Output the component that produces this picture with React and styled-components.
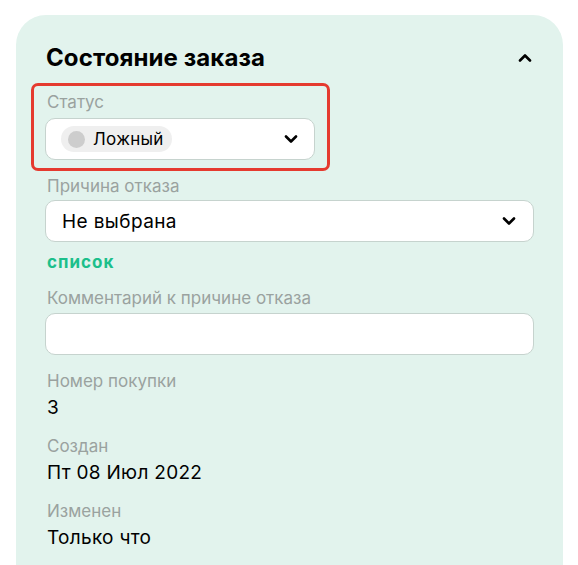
import React from 'react';
import styled, { createGlobalStyle } from 'styled-components';

const GlobalStyle = createGlobalStyle`
  html, body {
    margin: 0;
    padding: 0;
    background: #ffffff;
    font-family: Inter, "Noto Sans", sans-serif;
    color: #000;
    overflow: hidden;
  }
`;

const Page = styled.div`
  padding: 15px 15px 0 16px;
`;

const Panel = styled.section`
  width: 547px;
  box-sizing: border-box;
  min-height: 600px;
  padding: 28px 29px 40px;
  background: #e2f3ed;
  border-radius: 30px 30px 0 0;
`;

const Header = styled.div`
  display: flex;
  align-items: center;
  justify-content: space-between;
  height: 28px;
  margin-bottom: 12px;
`;

const Title = styled.h2`
  margin: 0 0 0 1px;
  font-size: 24px;
  font-weight: 700;
  letter-spacing: 0.1px;
`;

const Body = styled.div`
  display: flex;
  flex-direction: column;
  gap: 16px;
`;

const Highlight = styled.div`
  align-self: flex-start;
  border: 3px solid #e53a2f;
  border-radius: 7px;
  padding: 6px 12px 8px 11px;
  margin: 0 0 -11px -14px;
`;

const Field = styled.div`
  display: flex;
  flex-direction: column;
  gap: ${(p) => p.$gap || 4}px;
`;

const Label = styled.div`
  font-size: 17px;
  line-height: 20px;
  color: #9aa29f;
  padding-left: 2px;
`;

const Value = styled.div`
  font-size: 19px;
  line-height: 24px;
  letter-spacing: 0.3px;
  padding-left: 2px;
`;

const Control = styled.div`
  display: flex;
  align-items: center;
  justify-content: space-between;
  box-sizing: border-box;
  width: ${(p) => (p.$width ? `${p.$width}px` : '100%')};
  height: 42px;
  padding: 0 ${(p) => p.$pr || 16}px 0 ${(p) => p.$pl || 16}px;
  background: #ffffff;
  border: 1px solid #c6d3ce;
  border-radius: 10px;
  font-size: 19px;
  letter-spacing: 0.4px;
`;

const Pill = styled.span`
  display: inline-flex;
  align-items: center;
  gap: 8px;
  height: 26px;
  padding: 0 8px 0 7px;
  border-radius: 13px;
  background: #efefef;
  font-size: 17px;
  letter-spacing: 0.3px;
`;

const Dot = styled.span`
  width: 17px;
  height: 17px;
  border-radius: 50%;
  background: #cdcdcd;
`;

const LinkText = styled.a`
  margin-top: 6px;
  font-size: 17px;
  line-height: 20px;
  font-weight: 700;
  letter-spacing: 1px;
  color: #1cbf8b;
  padding-left: 2px;
  text-decoration: none;
`;

const Chevron = ({ up }) => (
  <svg width="14" height="9" viewBox="0 0 14 9" fill="none">
    <path
      d={up ? 'M2 7.5 L7 2.5 L12 7.5' : 'M2 1.5 L7 6.5 L12 1.5'}
      stroke="#000"
      strokeWidth="2.6"
      strokeLinecap="round"
      strokeLinejoin="round"
    />
  </svg>
);

const ChevronBox = styled.span`
  display: flex;
  margin-right: ${(p) => p.$mr || 0}px;
`;

export default function App() {
  return (
    <>
      <GlobalStyle />
      <Page>
        <Panel>
          <Header>
            <Title>Состояние заказа</Title>
            <ChevronBox $mr={2}>
              <Chevron up />
            </ChevronBox>
          </Header>
          <Body>
            <Highlight>
              <Field $gap={6}>
                <Label>Статус</Label>
                <Control $width={270} $pl={15} $pr={16}>
                  <Pill>
                    <Dot />
                    Ложный
                  </Pill>
                  <Chevron />
                </Control>
              </Field>
            </Highlight>
            <Field>
              <Label>Причина отказа</Label>
              <Control $pr={17}>
                Не выбрана
                <Chevron />
              </Control>
              <LinkText href="#">список</LinkText>
            </Field>
            <Field $gap={5}>
              <Label>Комментарий к причине отказа</Label>
              <Control />
            </Field>
            <Field $gap={5}>
              <Label>Номер покупки</Label>
              <Value>3</Value>
            </Field>
            <Field $gap={5}>
              <Label>Создан</Label>
              <Value>Пт 08 Июл 2022</Value>
            </Field>
            <Field $gap={5}>
              <Label>Изменен</Label>
              <Value>Только что</Value>
            </Field>
          </Body>
        </Panel>
      </Page>
    </>
  );
}
